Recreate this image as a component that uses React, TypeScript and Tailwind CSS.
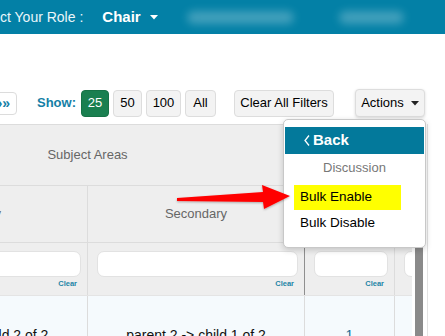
import React from "react";

const font = { fontFamily: '"Liberation Sans", Arial, sans-serif' };

function Caret({ color = "white" }: { color?: string }) {
  return (
    <svg width="8" height="5" viewBox="0 0 8 5">
      <polygon points="0,0 8,0 4,4.5" fill={color} />
    </svg>
  );
}

export default function App() {
  return (
    <div className="relative w-[445px] h-[336px] overflow-hidden bg-white" style={font}>
      {/* Header */}
      <div className="flex items-center h-[34px] bg-[#0380a6] text-white whitespace-nowrap">
        <span className="ml-[-28px] text-[14px] text-[#eaf6fa]">Select Your Role :</span>
        <span className="ml-[19px] text-[15px] font-bold">Chair</span>
        <span className="ml-[9px] flex items-center">
          <Caret />
        </span>
        <div className="ml-[29px] w-[107px] h-[13px] rounded-full bg-white/25 blur-[4px]" />
        <div className="ml-[45px] w-[65px] h-[13px] rounded-full bg-white/25 blur-[4px]" />
      </div>

      {/* Toolbar */}
      <div className="flex items-center mt-[55px] h-[28px] text-[13px] whitespace-nowrap">
        <div className="ml-[-20px] w-[37px] h-[23px] flex items-center justify-end pr-[6px] border border-[#dcdcdc] rounded-[4px] text-[#1580a6] text-[14px] font-bold">
          »»
        </div>
        <span className="ml-[20px] font-bold text-[#1580a6]">Show:</span>
        <div className="ml-[5px] flex gap-[4px]">
          <div className="w-[28px] h-[27px] flex items-center justify-center rounded-[4px] bg-[#1a7f50] text-white border border-[#167246]">25</div>
          <div className="w-[29px] h-[27px] flex items-center justify-center rounded-[4px] bg-[#f3f3f3] border border-[#dddddd] text-black">50</div>
          <div className="w-[35px] h-[27px] flex items-center justify-center rounded-[4px] bg-[#f3f3f3] border border-[#dddddd] text-black">100</div>
          <div className="w-[31px] h-[27px] flex items-center justify-center rounded-[4px] bg-[#f3f3f3] border border-[#dddddd] text-black">All</div>
        </div>
        <div className="ml-[18px] w-[100px] h-[27px] flex items-center justify-center rounded-[4px] bg-[#f3f3f3] border border-[#dddddd] text-black">
          Clear All Filters
        </div>
        <div className="ml-[21px] w-[70px] h-[28px] flex items-center justify-center gap-[7px] rounded-[4px] bg-[#f3f3f3] border border-[#dddddd] text-black shadow-[0_1px_3px_rgba(0,0,0,0.15)]">
          <span>Actions</span>
          <Caret color="#222" />
        </div>
      </div>

      {/* Table area */}
      <div className="flex mt-[7px]">
        <div className="w-[412px] overflow-hidden border-t border-[#dcdcdc] bg-[#eeeeee] text-[13px] text-[#666]">
          <div className="flex w-[700px] ml-[-130px]">
            <div className="w-[435px] h-[61px] flex items-center justify-center border-b border-[#dcdcdc] shrink-0">
              Subject Areas
            </div>
            <div className="flex-1 h-[61px] border-b border-l border-[#dcdcdc]" />
          </div>
          <div className="flex w-[700px] ml-[-130px]">
            <div className="w-[218px] h-[56px] flex items-center justify-center border-r border-[#dcdcdc] shrink-0">Primary</div>
            <div className="w-[217px] h-[56px] flex items-center justify-center border-r border-[#dcdcdc] shrink-0">Secondary</div>
            <div className="w-[90px] h-[56px] border-r border-[#dcdcdc] shrink-0" />
            <div className="flex-1 h-[56px]" />
          </div>
          <div className="flex w-[700px] ml-[-130px] border-t border-[#dcdcdc]">
            {[
              { w: "w-[218px]", b: "border-r border-[#dcdcdc]" },
              { w: "w-[217px]", b: "border-r border-[#8f8f8f]" },
              { w: "w-[90px]", b: "border-r border-[#dcdcdc]" },
              { w: "w-[120px]", b: "" },
            ].map((c, i) => (
              <div key={i} className={`${c.w} ${c.b} pl-[9px] pr-[6px] h-[52px] pt-[8px] shrink-0 flex flex-col`}>
                <div className="h-[26px] rounded-[7px] bg-white border border-[#e2e2e2]" />
                <div className="mt-[3px] pr-[4px] text-right text-[7.5px] font-bold text-[#2385a6] leading-none">Clear</div>
              </div>
            ))}
          </div>
          <div className="flex w-[700px] ml-[-130px] bg-[#f5fafd] text-[14px] text-[#111] border-t border-[#e4e4e4]">
            <div className="w-[218px] h-[60px] flex justify-center pt-[29px] border-r border-[#dcdcdc] shrink-0">parent 1 -&gt; child 2 of 2</div>
            <div className="w-[217px] h-[60px] flex justify-center pt-[29px] border-r border-[#dcdcdc] shrink-0">parent 2 -&gt; child 1 of 2</div>
            <div className="w-[90px] h-[60px] flex justify-center pt-[29px] border-r border-[#dcdcdc] shrink-0 text-[#1f6f96]">1</div>
            <div className="flex-1 h-[60px]" />
          </div>
        </div>
        <div className="ml-[3px] w-[8px] h-[220px] rounded-full bg-[#8a8a8a]" />
        <div className="ml-[4px] w-px h-[220px] bg-[#e3e3e3]" />
      </div>

      {/* Dropdown menu */}
      <div className="absolute left-[283px] top-[119px] w-[143px] h-[129px] bg-white border border-[#c8c8c8] rounded-[5px] shadow-[0_2px_6px_rgba(0,0,0,0.18)] pt-[7px] px-[1px] text-[13.5px] whitespace-nowrap">
        <div className="h-[27px] bg-[#03799b] flex items-center pl-[19px] text-white font-bold text-[15px]">
          <svg width="6" height="11" viewBox="0 0 6 11" className="mr-[3px]">
            <polyline points="5,0.5 1,5.5 5,10.5" fill="none" stroke="white" strokeWidth="1.3" />
          </svg>
          Back
        </div>
        <div className="h-[28px] flex items-center justify-center text-[13px] text-[#777]">Discussion</div>
        <div className="mt-[3px] ml-[9px] w-[107px] h-[25px] bg-[#ffff00] flex items-center pl-[6px] text-black">Bulk Enable</div>
        <div className="h-[26px] flex items-center pl-[15px] text-black">Bulk Disable</div>
      </div>

      {/* Red arrow */}
      <svg className="absolute left-0 top-0 pointer-events-none" width="445" height="336">
        <defs>
          <filter id="sh" x="-10%" y="-50%" width="120%" height="200%">
            <feDropShadow dx="0" dy="1" stdDeviation="1.2" floodColor="#000" floodOpacity="0.3" />
          </filter>
        </defs>
        <polygon
          points="177,198 263,192 262,185 290,196 264,209 263,202 177,201"
          fill="#ff0000"
          filter="url(#sh)"
        />
      </svg>
    </div>
  );
}
